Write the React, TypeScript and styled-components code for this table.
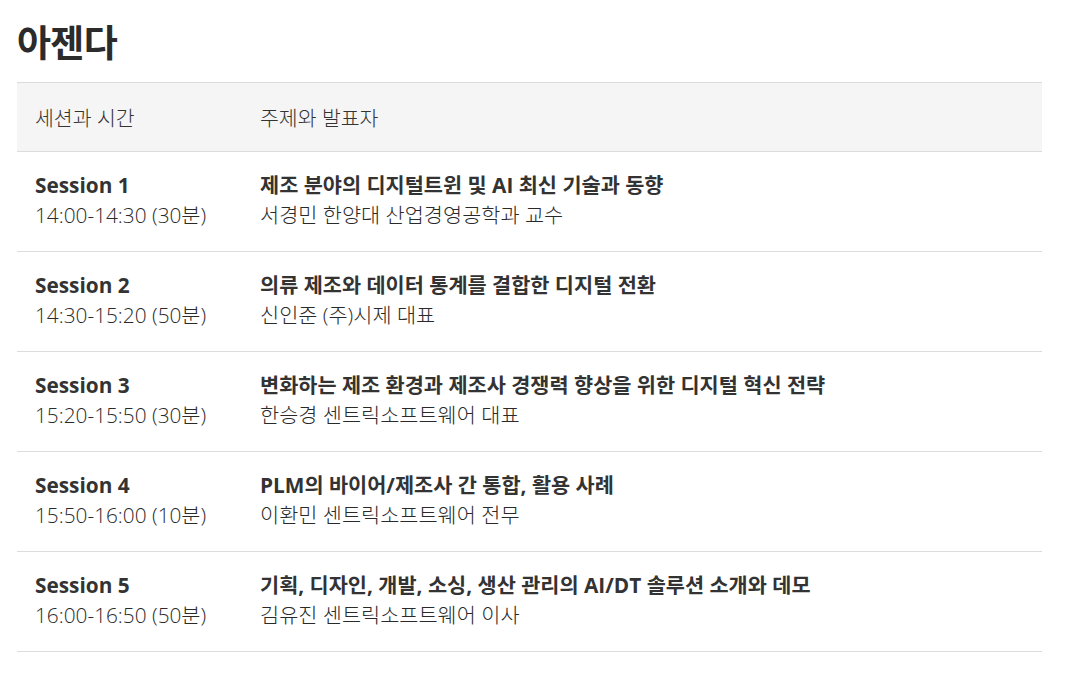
import { ReactElement } from 'react'
import styled, { createGlobalStyle } from 'styled-components'

const GlobalStyle = createGlobalStyle`
  body {
    margin: 0;
    background: #fff;
    font-family: 'Open Sans', 'Noto Sans CJK KR', sans-serif;
    color: #333;
  }
`

const Page = styled.div`
  padding: 18px 27px 30px 17px;
`

const Title = styled.h2`
  margin: 0 0 14px;
  font-size: 37px;
  line-height: 50px;
  font-weight: 700;
  color: #2b2b2b;
  letter-spacing: -0.7px;
`

const Table = styled.div`
  border-top: 1px solid #dcdcdc;
`

const Row = styled.div<{ header?: boolean }>`
  display: grid;
  grid-template-columns: 225px 1fr;
  align-items: center;
  box-sizing: border-box;
  height: ${(p) => (p.header ? '69px' : '100px')};
  padding-bottom: ${(p) => (p.header ? '0' : '3px')};
  background: ${(p) => (p.header ? '#f5f5f5' : '#fff')};
  border-bottom: 1px solid #dcdcdc;
`

const Cell = styled.div`
  padding-left: 18px;
`

const HeadText = styled.span`
  font-size: 20.5px;
  font-weight: 300;
  color: #333;
`

const Strong = styled.div`
  font-size: 20.8px;
  line-height: 30px;
  font-weight: 700;
  color: #333;
`

const Sub = styled.div`
  font-size: 20.8px;
  line-height: 30px;
  font-weight: 300;
  color: #2a2a2a;
`

interface Session {
  name: string
  time: string
  topic: string
  speaker: string
}

const sessions: Session[] = [
  {
    name: 'Session 1',
    time: '14:00-14:30 (30분)',
    topic: '제조 분야의 디지털트윈 및 AI 최신 기술과 동향',
    speaker: '서경민 한양대 산업경영공학과 교수'
  },
  {
    name: 'Session 2',
    time: '14:30-15:20 (50분)',
    topic: '의류 제조와 데이터 통계를 결합한 디지털 전환',
    speaker: '신인준 (주)시제 대표'
  },
  {
    name: 'Session 3',
    time: '15:20-15:50 (30분)',
    topic: '변화하는 제조 환경과 제조사 경쟁력 향상을 위한 디지털 혁신 전략',
    speaker: '한승경 센트릭소프트웨어 대표'
  },
  {
    name: 'Session 4',
    time: '15:50-16:00 (10분)',
    topic: 'PLM의 바이어/제조사 간 통합, 활용 사례',
    speaker: '이환민 센트릭소프트웨어 전무'
  },
  {
    name: 'Session 5',
    time: '16:00-16:50 (50분)',
    topic: '기획, 디자인, 개발, 소싱, 생산 관리의 AI/DT 솔루션 소개와 데모',
    speaker: '김유진 센트릭소프트웨어 이사'
  }
]

export default function App(): ReactElement {
  return (
    <Page>
      <GlobalStyle />
      <Title>아젠다</Title>
      <Table>
        <Row header>
          <Cell>
            <HeadText>세션과 시간</HeadText>
          </Cell>
          <Cell>
            <HeadText>주제와 발표자</HeadText>
          </Cell>
        </Row>
        {sessions.map((s) => (
          <Row key={s.name}>
            <Cell>
              <Strong>{s.name}</Strong>
              <Sub>{s.time}</Sub>
            </Cell>
            <Cell>
              <Strong>{s.topic}</Strong>
              <Sub>{s.speaker}</Sub>
            </Cell>
          </Row>
        ))}
      </Table>
    </Page>
  )
}
